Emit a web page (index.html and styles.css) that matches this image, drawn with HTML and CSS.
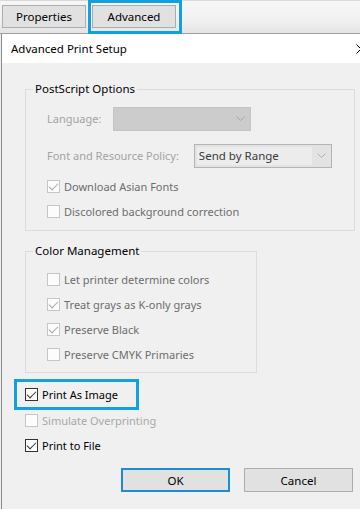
FILE: index.html
```html
<!DOCTYPE html>
<html lang="en">
<head>
  <meta charset="UTF-8" />
  <meta name="viewport" content="width=device-width, initial-scale=1.0"/>
  <title>Advanced Print Setup</title>
  <link rel="stylesheet" href="styles.css">
</head>
<body>
  <div class="tabbar">
    <button class="tab">Properties</button>
    <div class="mark tab-mark">
      <button class="tab">Advanced</button>
    </div>
  </div>

  <div class="dialog">
    <div class="title">
      <span>Advanced Print Setup</span>
      <svg class="close" width="10" height="10" viewBox="0 0 10 10">
        <path d="M0.5 0.5 L9.5 9.5 M9.5 0.5 L0.5 9.5" stroke="#000" stroke-width="1" fill="none"/>
      </svg>
    </div>

    <div class="content">
      <fieldset class="group group-ps">
        <legend>PostScript Options</legend>
        <div class="field-row">
          <span class="field-label">Language:</span>
          <div class="select select-lang">
            <span class="select-text"></span>
            <span class="select-arrow">
              <svg width="9" height="5" viewBox="0 0 9 5"><path d="M0.5 0.5 L4.5 4.5 L8.5 0.5" stroke="#a6a6a6" fill="none"/></svg>
            </span>
          </div>
        </div>
        <div class="field-row">
          <span class="field-label">Font and Resource Policy:</span>
          <div class="select select-font">
            <span class="select-text">Send by Range</span>
            <span class="select-arrow">
              <svg width="9" height="5" viewBox="0 0 9 5"><path d="M0.5 0.5 L4.5 4.5 L8.5 0.5" stroke="#b0b0b0" fill="none"/></svg>
            </span>
          </div>
        </div>
        <div class="check-row muted">
          <span class="box off checked"></span>Download Asian Fonts
        </div>
        <div class="check-row muted">
          <span class="box off"></span>Discolored background correction
        </div>
      </fieldset>

      <fieldset class="group group-color">
        <legend>Color Management</legend>
        <div class="check-row muted">
          <span class="box off"></span>Let printer determine colors
        </div>
        <div class="check-row muted">
          <span class="box off checked"></span>Treat grays as K-only grays
        </div>
        <div class="check-row muted">
          <span class="box off checked"></span>Preserve Black
        </div>
        <div class="check-row muted">
          <span class="box off"></span>Preserve CMYK Primaries
        </div>
      </fieldset>

      <div class="mark image-mark">
        <div class="check-row">
          <span class="box checked"></span>Print As Image
        </div>
      </div>
      <div class="check-row plain disabled">
        <span class="box off"></span>Simulate Overprinting
      </div>
      <div class="check-row plain">
        <span class="box checked"></span>Print to File
      </div>

      <div class="buttons">
        <button class="btn btn-ok">OK</button>
        <button class="btn">Cancel</button>
      </div>
    </div>
  </div>
</body>
</html>
```

FILE: styles.css
```css
body {
  margin: 0;
  width: 360px;
  height: 509px;
  overflow: hidden;
  background: #f0f0f0;
  font-family: 'Noto Sans', sans-serif;
  font-size: 11px;
  color: #000;
}
.tabbar {
  display: flex;
  align-items: flex-start;
  gap: 2px;
  padding-left: 2px;
  border-top: 1px solid #dadada;
  border-bottom: 1px solid #a0a0a0;
  box-sizing: border-box;
  height: 34px;
  background: linear-gradient(to bottom, #f6f6f6, #f1f1f1 60%, #e4e4e4);
}
.tab {
  font: inherit;
  font-size: 11.5px;
  color: #000;
  height: 23px;
  margin-top: 4px;
  width: 84px;
  background: #e1e1e1;
  border: 1px solid #adadad;
  padding: 0;
}
.mark {
  border: 3px solid #14a0dc;
}
.tab-mark {
  margin-top: -1px;
  height: 34px;
  box-sizing: border-box;
  padding: 1px 3px 0 1px;
}
.tab-mark .tab {
  margin-top: 1px;
}
.dialog {
  border-left: 1px solid #8a8a8a;
  margin-left: 1px;
  height: 475px;
}
.title {
  height: 29px;
  background: #fff;
  display: flex;
  align-items: center;
  justify-content: space-between;
  padding-left: 9px;
  font-size: 11.5px;
}
.close {
  margin-right: -6px;
}
.content {
  padding: 18px 7px 0 23px;
}
.group {
  margin: 0;
  padding: 3px 0 6px 21px;
  border: 1px solid #dcdcdc;
  min-width: 0;
}
.group legend {
  padding: 0 2px;
  margin-left: -14px;
  line-height: 16px;
  font-size: 11.5px;
}
.group-ps {
  width: 330px;
  box-sizing: border-box;
}
.group-color {
  width: 232px;
  box-sizing: border-box;
  margin-top: 12px;
  padding-top: 8px;
  padding-bottom: 5px;
}
.field-row {
  height: 37px;
  display: flex;
  align-items: center;
}
.field-label {
  color: #a3a3a3;
}
.select {
  display: flex;
  height: 24px;
  box-sizing: border-box;
  width: 138px;
}
.select-lang {
  margin-left: 12px;
  background: #cccccc;
  border: 1px solid #c4c4c4;
}
.select-font {
  margin-left: 15px;
  border: 1px solid #b4b4b4;
  background: #e3e3e3;
  padding: 2px 0 2px 2px;
}
.select-text {
  flex: 1;
  display: flex;
  align-items: center;
  padding-left: 2px;
  font-size: 11.5px;
}
.select-font .select-text {
  background: #ececec;
  color: #3a3a3a;
}
.select-arrow {
  width: 19px;
  display: flex;
  align-items: center;
  justify-content: center;
}
.check-row {
  height: 25px;
  display: flex;
  align-items: center;
  gap: 4px;
}
.muted {
  color: #6d6d6d;
}
.disabled {
  color: #a8a8a8;
}
.box {
  width: 13px;
  height: 13px;
  box-sizing: border-box;
  border: 1px solid #333;
  background: #fff;
  position: relative;
}
.box.off {
  border-color: #c6c6c6;
  background: #fcfcfc;
}
.box.checked::after {
  content: "";
  position: absolute;
  left: 3px;
  top: 0px;
  width: 4px;
  height: 8px;
  border-right: 1px solid #333;
  border-bottom: 1px solid #333;
  transform: rotate(45deg);
}
.box.off.checked::after {
  border-color: #a8a8a8;
}
.image-mark {
  width: 125px;
  box-sizing: border-box;
  margin: 6px 0 0 -11px;
  padding-left: 8px;
}
.plain {
  height: 20px;
}
.plain + .plain {
  margin-top: 5px;
}
.buttons {
  display: flex;
  justify-content: flex-end;
  gap: 14px;
  margin-top: 13px;
}
.btn {
  font: inherit;
  font-size: 11.5px;
  color: #000;
  width: 109px;
  height: 24px;
  background: #e1e1e1;
  border: 1px solid #adadad;
  padding: 0;
}
.btn-ok {
  border: 2px solid #1a8cd8;
}
```
